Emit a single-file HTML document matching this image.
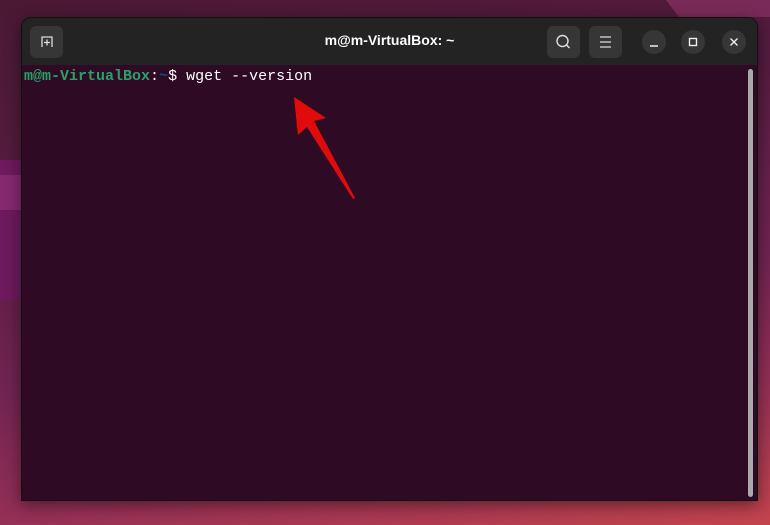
<!DOCTYPE html>
<html><head><style>
html,body{margin:0;padding:0;width:770px;height:525px;overflow:hidden}
body{background:linear-gradient(170deg,#4a1934 0%,#561b40 30%,#722452 60%,#963055 80%,#c4444c 100%);position:relative;font-family:"Liberation Sans",sans-serif}
.deco1{position:absolute;left:0;top:160px;width:22px;height:140px;background:#6e1a5e;clip-path:polygon(0 0,100% 0,100% 100%,0 100%)}
.deco2{position:absolute;left:0;top:175px;width:22px;height:35px;background:#862a70}
.deco3{position:absolute;left:640px;top:0;width:130px;height:17px;background:#7a2a58;clip-path:polygon(20% 0,100% 0,100% 100%,30% 100%)}
.win{position:absolute;left:21px;top:17px;width:735px;height:482px;border-radius:10px 10px 0 0;overflow:hidden;box-shadow:0 4px 16px rgba(0,0,0,.45);border:1px solid #111}
.title{position:absolute;left:0;top:0;width:735px;height:47px;background:#232323}
.term{position:absolute;left:0;top:47px;width:735px;height:435px;background:#2f0a24}
.btn{position:absolute;top:8px;width:33px;height:32px;background:#363636;border-radius:6px}
.circ{position:absolute;top:12px;width:24px;height:24px;border-radius:50%;background:#363636}
.ttl{position:absolute;left:0;width:735px;top:14px;text-align:center;color:#fff;font-weight:bold;font-size:14px}
.txt{position:absolute;left:2px;top:3px;font-family:"Liberation Mono",monospace;font-size:15px;color:#fff;white-space:pre}
.sb{position:absolute;left:726px;top:4px;width:5px;height:428px;background:#a9a9a9;border-radius:3px}
</style></head><body>
<div class="deco3"></div><div class="deco1"></div><div class="deco2"></div>
<div class="win">
<div class="title">
<div class="btn" style="left:8px"><svg width="33" height="32"><path d="M12 21V11h10v10" fill="none" stroke="#ddd" stroke-width="1.3"/><path d="M17 13.5v6M14 16.5h6" stroke="#ddd" stroke-width="1.3"/></svg></div>
<div class="ttl">m@m-VirtualBox: ~</div>
<div class="btn" style="left:525px"><svg width="33" height="32"><circle cx="15.5" cy="15" r="5.5" fill="none" stroke="#ddd" stroke-width="1.4"/><path d="M19.5 19l3 3" stroke="#ddd" stroke-width="1.5"/></svg></div>
<div class="btn" style="left:567px"><svg width="33" height="32"><path d="M11 11h11M11 16h11M11 21h11" stroke="#ddd" stroke-width="1.3"/></svg></div>
<div class="circ" style="left:620px"><svg width="24" height="24"><path d="M8 16h8" stroke="#eee" stroke-width="1.4"/></svg></div>
<div class="circ" style="left:659px"><svg width="24" height="24"><rect x="8.5" y="8.5" width="7" height="7" fill="none" stroke="#eee" stroke-width="1.4"/></svg></div>
<div class="circ" style="left:700px"><svg width="24" height="24"><path d="M8.5 8.5l7 7M15.5 8.5l-7 7" stroke="#eee" stroke-width="1.4"/></svg></div>
</div>
<div class="term">
<div class="txt"><span style="color:#26a269;font-weight:bold">m@m-VirtualBox</span>:<span style="color:#12488b;font-weight:bold">~</span>$ wget --version</div>
<div class="sb"></div>
</div>
</div>
<svg style="position:absolute;left:0;top:0" width="770" height="525"><polygon points="294,97 326,118 314,121 355,198 353,199 307,127 298,135" fill="#e00c0c"/></svg>
</body></html>
